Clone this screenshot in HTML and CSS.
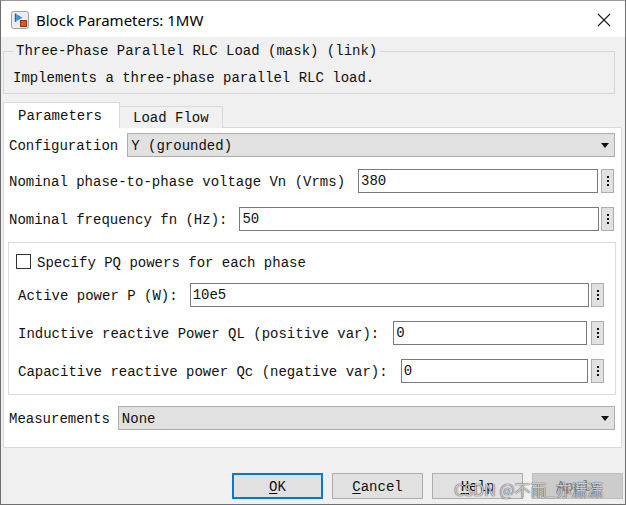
FILE: index.html
```html
<!DOCTYPE html>
<html>
<head>
<meta charset="utf-8">
<link rel="stylesheet" href="styles.css">
</head>
<body>
<div class="window">
  <div class="titlebar">
    <svg class="app-icon" width="18" height="18" viewBox="0 0 18 18">
      <rect x="0.5" y="0.5" width="17" height="17" rx="2" fill="#ececec" stroke="#a0a0a0"/>
      <path d="M4.5 2.5 V11" stroke="#2a64a8" stroke-width="1.4"/>
      <path d="M5.2 3 L11.5 6.8 L5.2 10.2 Z" fill="#3d8fe0"/>
      <rect x="9.5" y="9.5" width="6" height="6" fill="#e0522a" stroke="#9c2d12"/>
    </svg>
    <span class="title">Block Parameters: 1MW</span>
    <svg class="close" width="14" height="14" viewBox="0 0 14 14">
      <path d="M1 1 L13 13 M13 1 L1 13" stroke="#1a1a1a" stroke-width="1.1"/>
    </svg>
  </div>

  <fieldset class="desc">
    <legend>Three-Phase Parallel RLC Load (mask) (link)</legend>
    <div class="desc-text">Implements a three-phase parallel RLC load.</div>
  </fieldset>

  <div class="tabs">
    <div class="tab active">Parameters</div>
    <div class="tab">Load Flow</div>
  </div>

  <div class="panel">
    <div class="row row-config">
      <span class="label">Configuration</span>
      <div class="select"><span>Y (grounded)</span><i class="caret"></i></div>
    </div>
    <div class="row row-v">
      <span class="label">Nominal phase-to-phase voltage Vn (Vrms)</span>
      <div class="input">380</div>
      <div class="more"><b></b><b></b><b></b></div>
    </div>
    <div class="row row-f">
      <span class="label">Nominal frequency fn (Hz):</span>
      <div class="input">50</div>
      <div class="more"><b></b><b></b><b></b></div>
    </div>

    <div class="group">
      <div class="check-row">
        <span class="checkbox"></span>
        <span>Specify PQ powers for each phase</span>
      </div>
      <div class="row row-p">
        <span class="label">Active power P (W):</span>
        <div class="input">10e5</div>
        <div class="more"><b></b><b></b><b></b></div>
      </div>
      <div class="row row-ql">
        <span class="label">Inductive reactive Power QL (positive var):</span>
        <div class="input">0</div>
        <div class="more"><b></b><b></b><b></b></div>
      </div>
      <div class="row row-qc">
        <span class="label">Capacitive reactive power Qc (negative var):</span>
        <div class="input">0</div>
        <div class="more"><b></b><b></b><b></b></div>
      </div>
    </div>

    <div class="row row-meas">
      <span class="label">Measurements</span>
      <div class="select"><span>None</span><i class="caret"></i></div>
    </div>
  </div>

  <div class="buttons">
    <div class="btn default"><u>O</u>K</div>
    <div class="btn"><u>C</u>ancel</div>
    <div class="btn"><u>H</u>elp</div>
    <div class="btn disabled">Apply</div>
  </div>

  <span class="watermark">CSDN @不雨_亦潇潇</span>
</div>
</body>
</html>
```

FILE: styles.css
```css
* { box-sizing: border-box; }
html, body { margin: 0; padding: 0; }
body {
  width: 626px;
  height: 505px;
  overflow: hidden;
  background: #ffffff;
}
.window {
  position: relative;
  width: 626px;
  height: 505px;
  border: 1px solid #6e6e6e;
  border-top-color: #9a9a9a;
  background: #f0f0f0;
  display: flex;
  flex-direction: column;
  font-family: "Liberation Mono", "DejaVu Sans Mono", monospace;
  font-size: 14px;
  color: #111;
}
.titlebar {
  height: 36px;
  flex: none;
  background: #ffffff;
  display: flex;
  align-items: center;
  padding-left: 10px;
  padding-right: 14px;
}
.app-icon { flex: none; margin-top: 1px; }
.title {
  font-family: "Noto Sans", "Liberation Sans", sans-serif;
  font-size: 15px;
  color: #000;
  margin-left: 7px;
  margin-top: 1px;
  flex: 1;
}
.close { flex: none; margin-top: 1px; }

.desc {
  margin: 6px 10px 0 2px;
  padding: 11px 9px 7px 9px;
  border: 1px solid #d6d6d6;
  min-width: 0;
}
.desc legend {
  padding: 0 3px;
  line-height: 16px;
  height: 16px;
}
.desc-text {
  line-height: 16px;
}

.tabs {
  display: flex;
  align-items: flex-end;
  margin: 8px 0 -1px 2px;
  position: relative;
  z-index: 1;
}
.tab {
  height: 22px;
  line-height: 22px;
  padding-left: 13px;
  border: 1px solid #d9d9d9;
  border-bottom: none;
  background: #f0f0f0;
  width: 104px;
  margin-left: -1px;
}
.tab.active {
  margin-left: 0;
  height: 26px;
  line-height: 27px;
  width: 117px;
  background: #ffffff;
  padding-left: 14px;
}

.panel {
  margin: 0 3px 0 2px;
  height: 321px;
  flex: none;
  background: #ffffff;
  border: 1px solid #d9d9d9;
  padding: 5px 6px 0 5px;
  display: flex;
  flex-direction: column;
}

.row {
  display: flex;
  align-items: center;
  height: 24px;
  gap: 12px;
  white-space: nowrap;
}
.label, .select span, .input { position: relative; top: 1px; }
.row-config { gap: 9px; }
.row-v { margin-top: 12px; padding-right: 1px; gap: 13px; }
.row-f { margin-top: 14px; padding-right: 1px; }
.row-meas { margin-top: 11px; gap: 8px; }

.select {
  flex: 1;
  height: 24px;
  background: #e1e1e1;
  border: 1px solid #adadad;
  display: flex;
  align-items: center;
  padding-left: 3px;
  padding-right: 5px;
}
.select span { flex: 1; }
.caret {
  width: 0;
  height: 0;
  border-left: 4px solid transparent;
  border-right: 4px solid transparent;
  border-top: 5px solid #111;
}
.input {
  flex: 1;
  height: 24px;
  border: 1px solid #7a7a7a;
  background: #fff;
  line-height: 22px;
  padding-left: 2px;
  top: 0;
}
.more {
  flex: none;
  width: 13px;
  height: 24px;
  margin-left: -10px;
  background: #e1e1e1;
  border: 1px solid #adadad;
  display: flex;
  flex-direction: column;
  align-items: center;
  justify-content: center;
  gap: 2px;
}
.more b {
  display: block;
  width: 2px;
  height: 2px;
  background: #111;
}

.group {
  margin: 11px -1px 0 -1px;
  height: 153px;
  border: 1px solid #dcdcdc;
  padding: 11px 11px 0 9px;
  display: flex;
  flex-direction: column;
}
.check-row {
  display: flex;
  align-items: center;
  height: 15px;
  gap: 6px;
  margin-left: -2px;
}
.check-row span:last-child { position: relative; top: 1px; }
.checkbox {
  width: 15px;
  height: 15px;
  border: 1px solid #333;
  background: #fff;
}
.row-p { margin-top: 14px; }
.row-ql { margin-top: 14px; gap: 14px; }
.row-qc { margin-top: 14px; gap: 13px; }

.buttons {
  display: flex;
  justify-content: flex-end;
  gap: 9px;
  margin: 25px 2px 0 0;
}
.btn {
  width: 91px;
  height: 26px;
  background: #e1e1e1;
  border: 1px solid #adadad;
  display: flex;
  align-items: center;
  justify-content: center;
  color: #111;
  padding-top: 1px;
}
.btn u { text-underline-offset: 2px; }
.btn.default {
  border: 2px solid #0078d7;
}
.btn.disabled {
  background: #cccccc;
  border-color: #bfbfbf;
  color: #838383;
}
.watermark {
  position: absolute;
  left: 453px;
  top: 476px;
  font-family: "Noto Sans CJK SC", "Noto Sans", sans-serif;
  font-size: 16px;
  color: rgba(255, 255, 255, 0.75);
  text-shadow: 0 0 1px rgba(0, 0, 0, 0.7), 0 0 1px rgba(0, 0, 0, 0.5);
  pointer-events: none;
  white-space: nowrap;
}
```
